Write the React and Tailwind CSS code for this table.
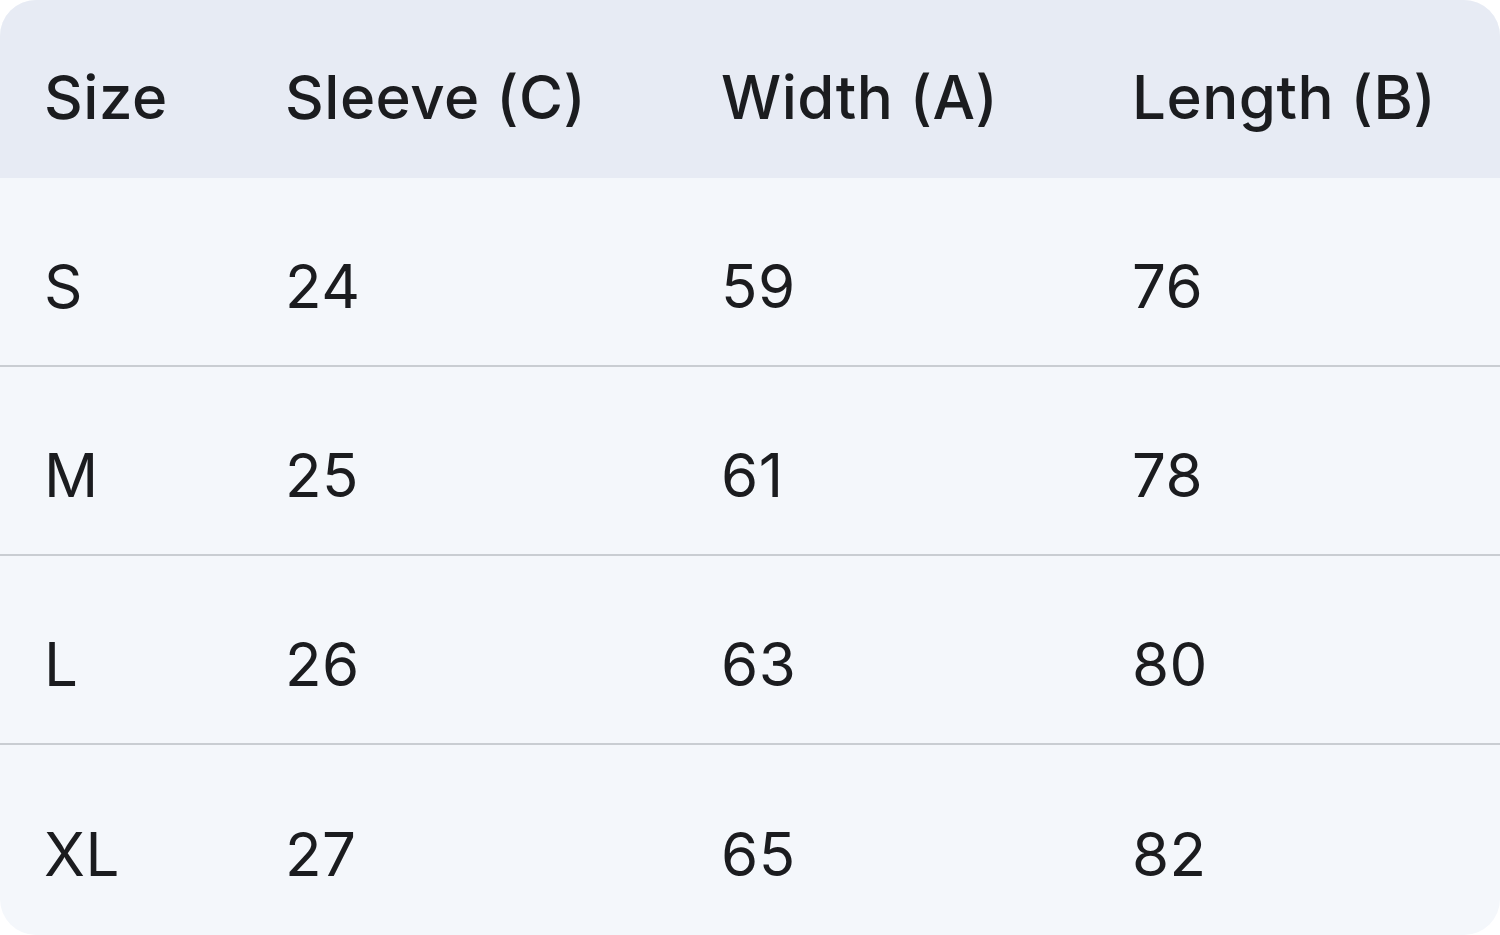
const headers = ['Size', 'Sleeve (C)', 'Width (A)', 'Length (B)']

const rows = [
  ['S', '24', '59', '76'],
  ['M', '25', '61', '78'],
  ['L', '26', '63', '80'],
  ['XL', '27', '65', '82'],
]

const cols = 'grid grid-cols-[241px_436px_411px_412px]'

export default function App() {
  return (
    <div className="w-[1500px] h-[935px] bg-white overflow-hidden" style={{ fontFamily: 'Inter, "Noto Sans", sans-serif' }}>
      <div className="h-full rounded-[36px] overflow-hidden bg-[#f4f7fb] text-[#1b1c1f]">
        {/* Header */}
        <div className={`${cols} h-[178px] items-center bg-[#e7ebf4]`}>
          {headers.map((h) => (
            <div key={h} className="pl-[44px] pt-[16px] text-[60px] font-medium tracking-[0.5px]">
              {h}
            </div>
          ))}
        </div>

        {/* Body */}
        {rows.map((r, i) => (
          <div
            key={r[0]}
            className={`${cols} h-[189px] items-center ${i < rows.length - 1 ? 'border-b-2 border-[#c9cdd2]' : ''}`}
          >
            {r.map((c, j) => (
              <div key={j} className="pl-[44px] pt-[28px] text-[60px] font-normal tracking-[0.5px]">
                {c}
              </div>
            ))}
          </div>
        ))}
      </div>
    </div>
  )
}
